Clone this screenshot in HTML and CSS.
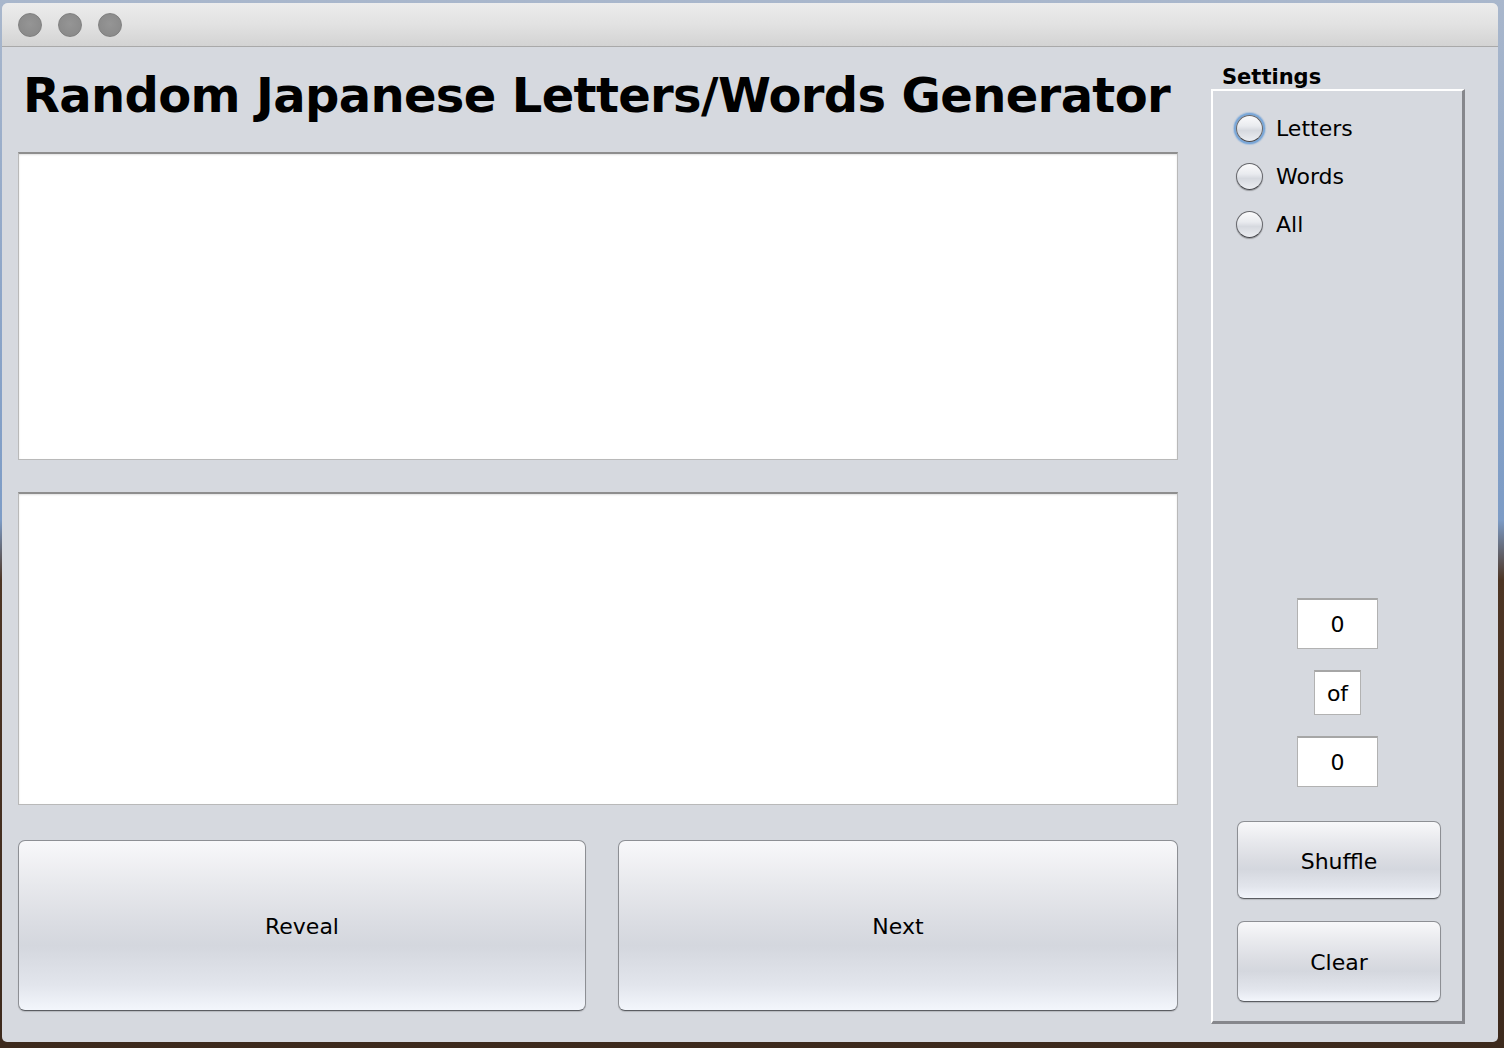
FILE: index.html
```html
<!DOCTYPE html>
<html lang="en">
<head>
<meta charset="utf-8">
<title>Random Japanese Letters/Words Generator</title>
<link rel="stylesheet" href="styles.css">
</head>
<body>
<div class="window">
  <div class="titlebar">
    <span class="light"></span>
    <span class="light"></span>
    <span class="light"></span>
  </div>
  <div class="content">
    <div class="main">
      <h1 class="title">Random Japanese Letters/Words Generator</h1>
      <div class="textarea ta1"></div>
      <div class="textarea ta2"></div>
      <div class="actions">
        <button class="btn btn-reveal">Reveal</button>
        <button class="btn btn-next">Next</button>
      </div>
    </div>
    <div class="side">
      <div class="side-label">Settings</div>
      <div class="panel">
        <div class="radios">
          <label class="radio"><span class="dot focused"></span><span class="radio-text">Letters</span></label>
          <label class="radio"><span class="dot"></span><span class="radio-text">Words</span></label>
          <label class="radio"><span class="dot"></span><span class="radio-text">All</span></label>
        </div>
        <div class="counter">
          <div class="field field-num">0</div>
          <div class="field field-of">of</div>
          <div class="field field-num field-total">0</div>
          <button class="btn btn-side btn-shuffle">Shuffle</button>
          <button class="btn btn-side btn-clear">Clear</button>
        </div>
      </div>
    </div>
  </div>
</div>
</body>
</html>
```

FILE: styles.css
```css
html, body {
  margin: 0;
  padding: 0;
}
body {
  width: 1504px;
  height: 1048px;
  overflow: hidden;
  font-family: "DejaVu Sans", "Liberation Sans", sans-serif;
  color: #000;
  background:
    linear-gradient(180deg, #a9b7cc 0px, #8ea6c8 280px, #7d9cc6 520px, #4d3524 580px, #3d2a1d 1048px);
}
.window {
  margin: 3px 0 0 2px;
  width: 1496px;
  height: 1039px;
  background: #d6d9df;
  border-radius: 6px 6px 5px 5px;
  overflow: hidden;
  box-sizing: border-box;
  display: flex;
  flex-direction: column;
}
.titlebar {
  height: 44px;
  box-sizing: border-box;
  border-bottom: 1px solid #a9a9a9;
  background: linear-gradient(180deg, #ececec 0%, #e2e2e2 50%, #d3d3d3 100%);
  display: flex;
  align-items: center;
  padding-left: 16px;
  gap: 16px;
}
.light {
  width: 24px;
  height: 24px;
  border-radius: 50%;
  background: radial-gradient(circle at 50% 45%, #959595 0%, #8b8b8b 70%, #7f7f7f 100%);
  box-sizing: border-box;
  border: 1px solid #808080;
}
.content {
  flex: 1;
  display: flex;
  align-items: flex-start;
  padding: 18px 0 0 16px;
  gap: 33px;
}
.main {
  width: 1160px;
  display: flex;
  flex-direction: column;
}
.title {
  margin: 0 0 27px 5px;
  height: 60px;
  line-height: 60px;
  font-size: 48px;
  font-weight: bold;
  letter-spacing: -0.65px;
  white-space: nowrap;
}
.textarea {
  background: #fff;
  box-sizing: border-box;
  border: 1px solid #b9b9b9;
  border-top: 2px solid #8e8e8e;
  box-shadow: inset 0 1px 2px rgba(0,0,0,0.12);
}
.ta1 {
  height: 308px;
}
.ta2 {
  margin-top: 32px;
  height: 313px;
}
.actions {
  margin-top: 35px;
  display: flex;
  gap: 32px;
}
.btn {
  font-family: "DejaVu Sans", "Liberation Sans", sans-serif;
  font-size: 22px;
  color: #000;
  box-sizing: border-box;
  border: 1px solid #8d8f94;
  border-bottom-color: #5b5d62;
  border-radius: 7px;
  background: linear-gradient(180deg, #f8f8fa 0%, #e8e9ed 25%, #dadce2 50%, #d4d7de 62%, #e2e5ec 85%, #f3f6fc 100%);
  box-shadow: 0 1px 1px rgba(0,0,0,0.15);
  padding: 2px 0 0 0;
  margin: 0;
}
.btn-reveal {
  width: 568px;
  height: 171px;
}
.btn-next {
  width: 560px;
  height: 171px;
}
.side {
  width: 254px;
  display: flex;
  flex-direction: column;
}
.side-label {
  height: 24px;
  line-height: 24px;
  font-size: 21px;
  font-weight: bold;
  padding-left: 11px;
}
.panel {
  height: 935px;
  box-sizing: border-box;
  border-top: 2px solid #ffffff;
  border-left: 2px solid #ffffff;
  border-right: 3px solid #86878c;
  border-bottom: 3px solid #86878c;
  display: flex;
  flex-direction: column;
  padding: 13px 0 19px 0;
}
.radios {
  display: flex;
  flex-direction: column;
  padding-left: 23px;
}
.radio {
  height: 48px;
  display: flex;
  align-items: center;
  gap: 13px;
  font-size: 22px;
}
.dot {
  width: 27px;
  height: 27px;
  box-sizing: border-box;
  border-radius: 50%;
  border: 1.5px solid #66676c;
  border-bottom-color: #47484c;
  background: linear-gradient(180deg, #fbfbfc 0%, #e9ebef 40%, #d6d9df 58%, #eceef2 100%);
  box-shadow: 0 1px 1px rgba(0,0,0,0.3);
}
.dot.focused {
  box-shadow: 0 0 0 2px #7aa7d8, 0 0 1px 3px rgba(122,167,216,0.45);
}
.counter {
  margin-top: auto;
  display: flex;
  flex-direction: column;
  align-items: center;
}
.field {
  background: #fff;
  box-sizing: border-box;
  border: 1px solid #b2b2b2;
  border-top: 2px solid #a6a6a6;
  font-size: 22px;
  display: flex;
  align-items: center;
  justify-content: center;
}
.field-num {
  width: 81px;
  height: 51px;
}
.field-of {
  width: 47px;
  height: 45px;
  margin-top: 21px;
}
.field-total {
  margin-top: 21px;
}
.btn-side {
  width: 204px;
  margin-left: 3px;
}
.btn-shuffle {
  height: 78px;
  margin-top: 34px;
}
.btn-clear {
  height: 81px;
  margin-top: 22px;
}
```
